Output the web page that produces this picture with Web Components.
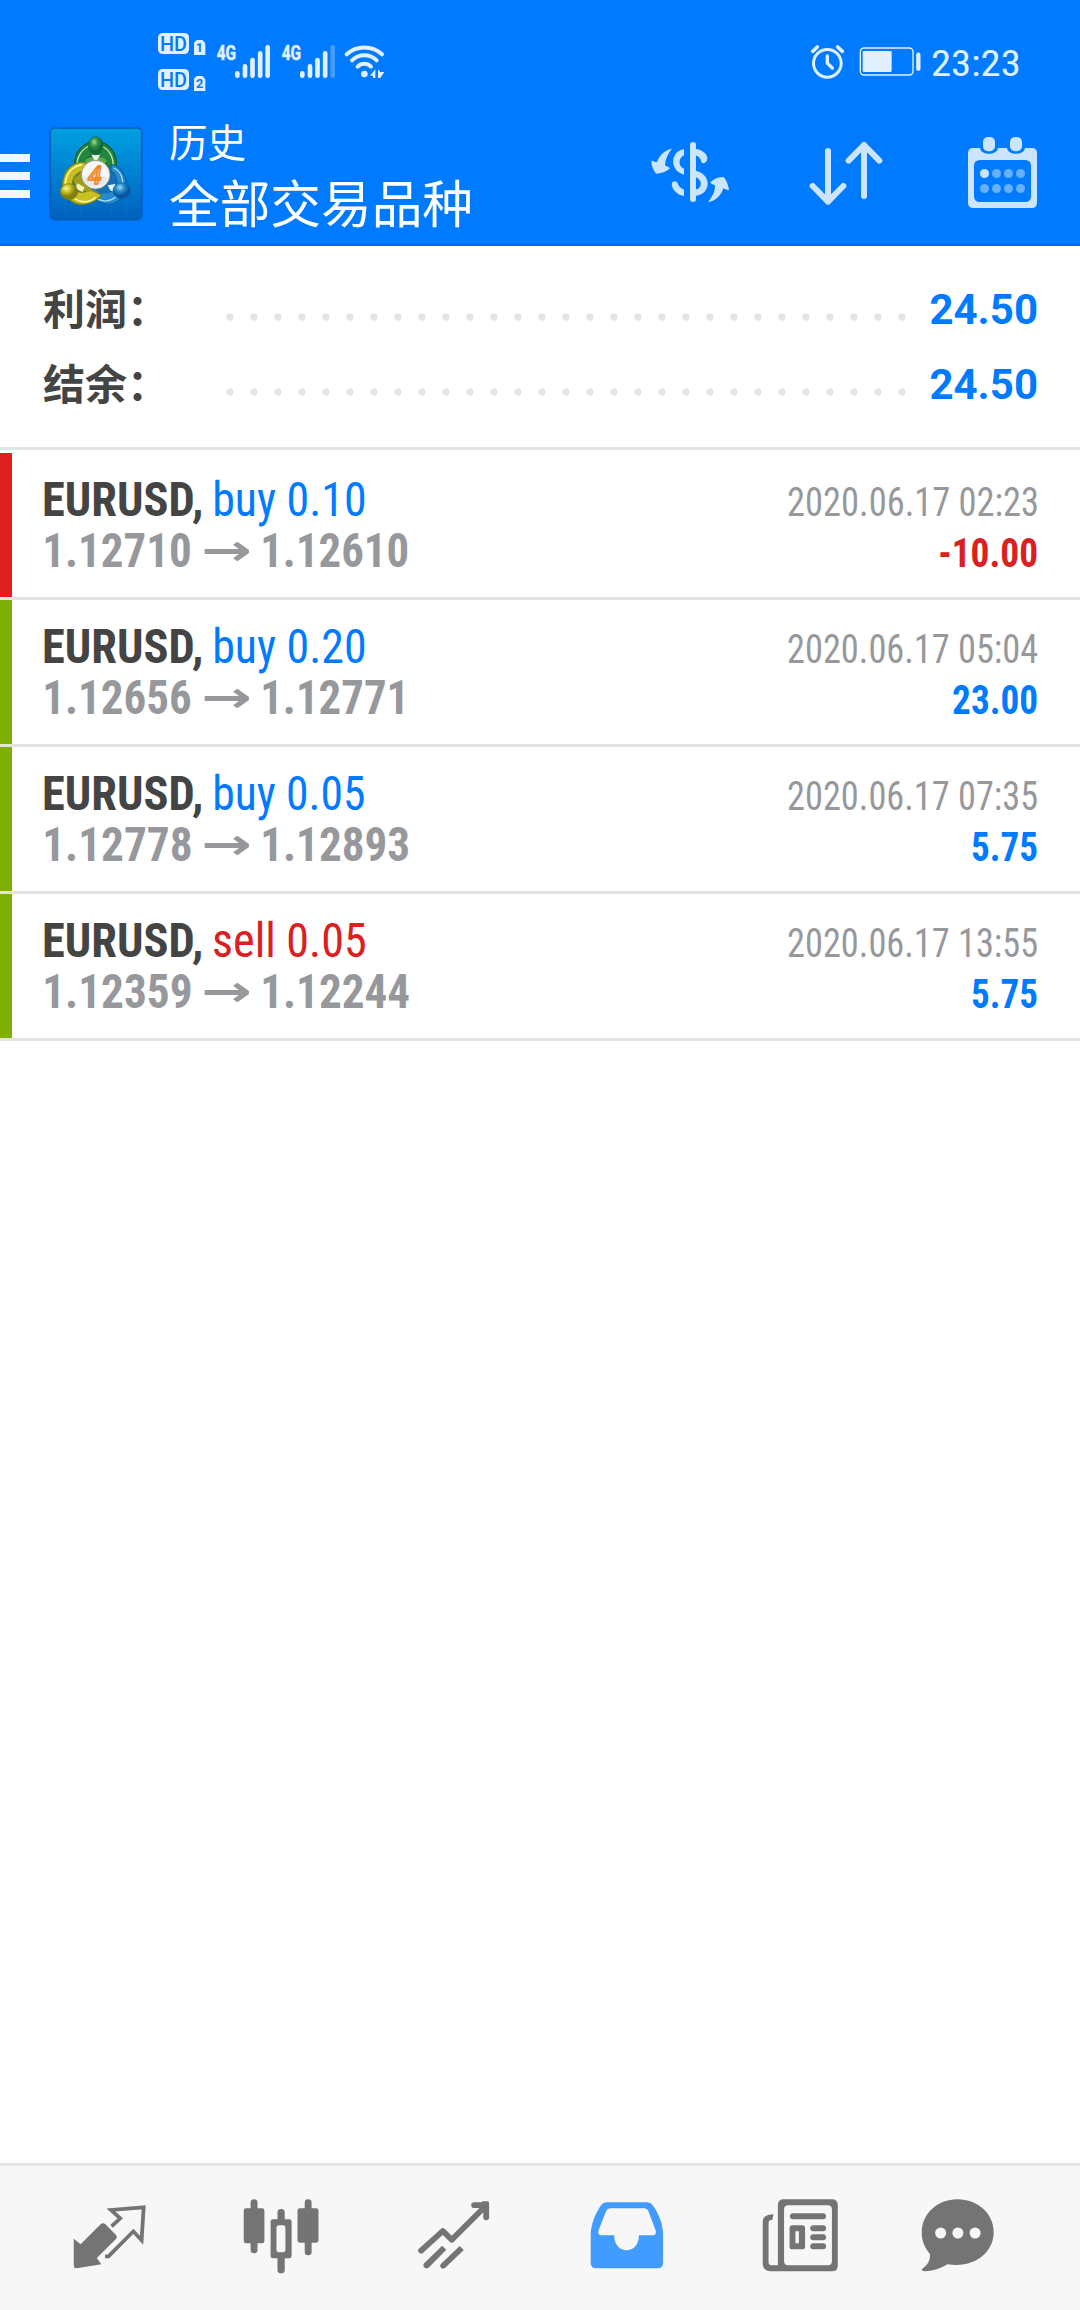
<!DOCTYPE html>
<html lang="zh-CN">
<head>
<meta charset="utf-8">
<title>历史</title>
<style>
html,body{margin:0;padding:0;background:#fff}
body{width:1080px;height:2310px;overflow:hidden;font-family:"Roboto Condensed",Roboto,"Noto Sans CJK SC",sans-serif}
</style>
</head>
<body>
<trade-app></trade-app>
<script>
const define=(name,html,extra)=>{
  const t=document.createElement('template');t.innerHTML=html;
  customElements.define(name,class extends HTMLElement{
    connectedCallback(){
      if(this.shadowRoot)return;
      this.attachShadow({mode:'open'}).append(t.content.cloneNode(true));
      if(extra)extra.call(this,this.shadowRoot);
    }
  });
};

/* Text whose drawn glyphs span exactly `ink` pixels. */
const ctx=document.createElement('canvas').getContext('2d');
const FAMILY='"Roboto Condensed",Roboto,"Noto Sans CJK SC",sans-serif';
customElements.define('fit-text',class extends HTMLElement{
  connectedCallback(){
    if(this.shadowRoot)return;
    const a=n=>this.getAttribute(n),size=+a('size'),ink=+a('ink'),weight=a('weight')||400,family=a('family')||FAMILY;
    const root=this.attachShadow({mode:'open'});
    root.innerHTML=`<style>:host{display:block;flex:none;width:${ink}px;white-space:pre}
      span{display:inline-block;transform-origin:0 50%}</style><span></span>`;
    const s=root.querySelector('span');
    s.textContent=a('text');
    s.style.font=`${weight} ${size}px/${a('line')||51}px ${family}`;
    ctx.font=`${weight} ${size}px ${family}`;
    const m=ctx.measureText(a('text')),k=ink/(m.actualBoundingBoxLeft+m.actualBoundingBoxRight);
    s.style.transform=`translateX(${m.actualBoundingBoxLeft*k}px) scaleX(${k})`;
  }
});

define('status-bar',`<style>
:host{display:flex;height:110px;box-sizing:border-box;padding:20px 62px 0 140px;justify-content:space-between;color:#e0f0ff}
svg{display:block}
.right{display:flex}
fit-text{margin:23px 0 0 2px}
</style>
<svg width="260" height="80" viewBox="0 0 780 240" fill="#e0f0ff" font-family="Roboto" font-weight="700">
<rect x="54" y="39" width="93" height="63" rx="14"/><rect x="54" y="147" width="93" height="63" rx="14"/>
<g fill="#007bff" font-size="61" font-weight="500"><text x="60" y="93" textLength="81" lengthAdjust="spacingAndGlyphs">HD</text><text x="60" y="201" textLength="81" lengthAdjust="spacingAndGlyphs">HD</text></g>
<path d="M170 60H187L196 70V105H162V68ZM170 168H187L196 178V213H162V176Z"/>
<g fill="#007bff" font-size="38"><text x="167" y="97">1</text><text x="168" y="205">2</text></g>
<g font-size="61" font-weight="700" stroke="#e0f0ff" stroke-width="1.500"><text x="230" y="119" textLength="58" lengthAdjust="spacingAndGlyphs">4G</text><text x="425" y="119" textLength="58" lengthAdjust="spacingAndGlyphs">4G</text></g>
<g stroke="#e0f0ff" stroke-width="14" stroke-linecap="round">
<path d="M292 160V167M315 139V167M337.500 120V167M360.500 100V167M383 82V167"/>
<path d="M487 160V167M510 139V167M532.500 120V167M555.500 100V167"/><path d="M578 82V167" opacity=".3"/></g>
<g fill="none" stroke="#e0f0ff" stroke-width="12" stroke-linecap="round"><path d="M620 103A78 78 0 0 1 726 103M636 121A53 53 0 0 1 710 121M653 140A28 28 0 0 1 693 140"/></g>
<circle cx="673" cy="162" r="10"/><path d="M706 148V174H699V167H690ZM714 148L721 156H733L721 174H714Z"/>
</svg>
<div class="right">
<svg width="150" height="80" viewBox="0 0 450 240" fill="none" stroke="#e0f0ff" stroke-linecap="round">
<circle cx="142" cy="130" r="41.500" stroke-width="9"/><path d="M142 108V130L157 144" stroke-width="10" stroke-linejoin="round"/><path d="M98 94L112 81M187 94L173 81" stroke-width="11"/>
<rect x="241" y="84" width="158" height="81" rx="11" stroke-width="4"/><rect x="248" y="93" width="87" height="63" rx="4" fill="#e0f0ff" stroke="none"/><path d="M415 104V146" stroke-width="13"/>
</svg>
<fit-text text="23:23" size="36.500" ink="86.500" line="41"></fit-text>
</div>`);

define('app-logo',`<style>:host{display:block;flex:none;width:92px;height:92px}svg{display:block;overflow:visible}</style>
<svg width="92" height="92" viewBox="30 24 276 276">
<defs>
<linearGradient id="bg" x2="0" y2="1"><stop stop-color="#00a0e0"/><stop offset=".5" stop-color="#0080d2"/><stop offset="1" stop-color="#0060bd"/></linearGradient>
<radialGradient id="g" cx=".4" cy=".3"><stop stop-color="#a6e092"/><stop offset=".45" stop-color="#38944b"/><stop offset="1" stop-color="#116d36"/></radialGradient>
<radialGradient id="y" cx=".35" cy=".3"><stop stop-color="#f9f397"/><stop offset=".5" stop-color="#c9c025"/><stop offset="1" stop-color="#817f10"/></radialGradient>
<radialGradient id="b" cx=".4" cy=".3"><stop stop-color="#a3e0f8"/><stop offset=".5" stop-color="#278dce"/><stop offset="1" stop-color="#0758a3"/></radialGradient>
</defs>
<rect x="30.500" y="24.500" width="275" height="275" rx="13" fill="url(#bg)" stroke="#0759ae" stroke-width="4"/>
<path d="M76 27V297M122 27V297M168 27V297M214 27V297M260 27V297M33 70H303M33 116H303M33 162H303M33 208H303M33 254H303" stroke="#4cc0f0" stroke-opacity=".13" stroke-width="2"/>
<g stroke-linejoin="round">
<path d="M104 137C101 98 130 65 167 64C207 64 233 101 229 140C228 158 222 169 214 178L187 151C197 133 193 111 167 102C145 109 133 122 134 137L119 158Z" fill="#238540" stroke="#0b6235" stroke-width="4"/>
<path d="M134 132L158 98H176L208 142L192 190H150Z" fill="#1c6b34"/>
<path d="M111 137C110 109 127 85 153 75M183 78C211 89 222 116 219 145" fill="none" stroke="#b9e7a9" stroke-width="4"/>
<path d="M134 123C145 105 190 105 201 123L184 142H150Z" fill="#55ac4c"/><path d="M154 104H181L171 120H163Z" fill="#fff" opacity=".9"/>
<path d="M214 133C244 139 263 170 257 205C251 239 221 259 190 250C164 243 147 229 139 210L168 196C183 219 214 224 229 196C233 177 226 162 211 151Z" fill="#248bce" stroke="#0963a9" stroke-width="4"/>
<path d="M205 150L230 172L222 214L180 224L160 200Z" fill="#1571b4"/>
<path d="M221 144C245 154 251 181 247 202M150 219C176 247 208 250 229 229" fill="none" stroke="#a7dcf4" stroke-width="4"/>
<path d="M138 128C99 121 68 154 68 195C72 239 109 262 146 250C165 244 178 235 184 225L150 208C130 224 98 216 97 194C97 174 110 157 137 151Z" fill="#cabf20" stroke="#77841c" stroke-width="4"/>
<path d="M130 150L100 178L108 208L150 216L160 200Z" fill="#a39d1c"/>
<path d="M126 134C94 140 78 163 76 191M104 236C126 250 149 247 167 232" fill="none" stroke="#fbf5a0" stroke-width="5"/>
<path d="M112 190L133 202L128 216L108 207Z" fill="#fff7bd"/><path d="M203 196L226 192L224 217L211 211Z" fill="#e3f7ff"/>
</g>
<ellipse cx="167" cy="77" rx="22" ry="27" fill="url(#g)" stroke="#11683a" stroke-width="2"/>
<ellipse cx="87" cy="215" rx="26" ry="24" fill="url(#y)" stroke="#777914" stroke-width="2"/>
<ellipse cx="245" cy="212" rx="26" ry="24" fill="url(#b)" stroke="#0960aa" stroke-width="2"/>
<circle cx="167" cy="164" r="43" fill="#f7f7f9" stroke="#76765a" stroke-width="2"/>
<path d="M127 174Q166 161 206 174A43 43 0 0 1 127 174Z" fill="#dedee8" opacity=".6"/>
<text x="165" y="191" text-anchor="middle" font-family="Roboto" font-style="italic" font-weight="500" font-size="75" fill="#ffbc6b" stroke="#f2841e" stroke-width="4">4</text>
</svg>`);

define('tool-bar',`<style>
:host{display:flex;height:133px;align-items:flex-start}
svg{display:block;flex:none}
.menu{margin-top:44px}
app-logo{margin:18px 0 0 20px}
.titles{width:302.500px;margin:8.500px 0 0 27.500px}
.actions{display:flex;margin:25px 0 0 178px}
</style>
<svg class="menu" width="30" height="44" fill="#f0f8ff"><path d="M0 0H30V8H0ZM0 18H30V26H0ZM0 36H30V44H0Z"/></svg>
<app-logo></app-logo>
<div class="titles"><fit-text text="历史" size="39" ink="75" line="51"></fit-text><fit-text text="全部交易品种" size="51" ink="300" line="71"></fit-text></div>
<div class="actions">
<svg width="80" height="75" viewBox="60 45 240 225" fill="#cce5ff">
<path d="M126 86C113 87 91 99 80 127C75 126 70 122 64 122C64 137 69 148 78 161C94 161 108 156 120 145C116 141 110 139 105 136C106 118 114 100 126 86ZM234 246C246 233 256 214 255 196C250 193 245 192 240 188C252 176 265 171 281 171C290 182 294 194 297 209C292 212 287 207 280 205C274 225 258 244 234 246Z"/>
<rect x="180" y="66" width="18" height="180" rx="9"/>
<path d="M162 87C119 95 119 153 162 164V146C144 140 144 114 162 106ZM162 209C152 206 145 198 143 190C140 180 126 182 125 192C127 211 143 226 162 228ZM196 86C216 89 232 101 232 115C232 127 221 134 214 127C213 116 207 109 196 106ZM196 152C220 156 234 174 233 192C232 214 216 226 196 228V209C217 206 219 179 196 171Z"/>
</svg>
<svg style="margin-left:78px" width="75" height="75" viewBox="534 45 225 225" fill="none" stroke="#cce5ff" stroke-width="18" stroke-linecap="round" stroke-linejoin="round"><path d="M594 93V245M548 198L594 245L640 198M702 228V75M656 122L702 75L748 122"/></svg>
<svg style="margin-left:84px" width="72" height="75" viewBox="1011 45 216 225" fill="#cce5ff">
<path fill-rule="evenodd" d="M1030 84H1050C1052 107 1102 107 1104 84H1131C1133 107 1183 107 1185 84H1205Q1221 84 1221 100V248Q1221 264 1205 264H1030Q1014 264 1014 248V100Q1014 84 1030 84ZM1050 120Q1032 120 1032 138V228Q1032 246 1050 246H1185Q1203 246 1203 228V138Q1203 120 1185 120Z"/>
<rect x="1059" y="51" width="36" height="43" rx="15"/><rect x="1140" y="51" width="36" height="43" rx="15"/><circle cx="1063.500" cy="160.500" r="13.500"/>
<g fill="#66b0ff"><circle cx="1099.500" cy="160.500" r="13.500"/><circle cx="1135.500" cy="160.500" r="13.500"/><circle cx="1171.500" cy="160.500" r="13.500"/><circle cx="1063.500" cy="205.500" r="13.500"/><circle cx="1099.500" cy="205.500" r="13.500"/><circle cx="1135.500" cy="205.500" r="13.500"/><circle cx="1171.500" cy="205.500" r="13.500"/></g></svg>
</div>`);

define('summary-row',`<style>
:host{display:flex;height:75px;padding-left:43px;color:#444}
.label{width:175px;flex:none;font:700 42px/60px "Noto Sans CJK SC",sans-serif;height:60px;white-space:nowrap}
.dots{width:696px;flex:none;height:8px;margin-top:36.300px;background:radial-gradient(circle,#e4e4e4 3.300px,transparent 4px) 0 0/24px 8px repeat-x}
.value{flex:1;text-align:right;padding-right:42px;color:#007bff;font:700 42px/60px Roboto,sans-serif;margin-top:3px}
</style><div class="label"><slot></slot></div><div class="dots"></div><div class="value"><slot name="value"></slot></div>`);

define('deal-row',`<style>
:host{display:flex;justify-content:space-between;height:144px;border-bottom:3px solid #e4e4e4;background:#fff;color:#444}
.bar{width:12px;background:#7fb000;flex:none}
:host([loss]) .bar{background:#e02020}
.main{flex:1;padding:21px 0 0 32px}
.line{display:flex;height:51px}
.side{padding:24px 43px 0 0;display:flex;flex-direction:column;align-items:flex-end}
.price{color:#97989c;padding-left:.700px}
</style><div class="bar"></div><div class="main"><div class="line name"></div><div class="line price"></div></div><div class="side"></div>`,
function(r){
  const a=n=>this.getAttribute(n),ft=(text,size,ink,weight,style)=>`<fit-text text="${text}" size="${size}" ink="${ink}" weight="${weight}" style="${style||''}"></fit-text>`;
  const blue='#007bff',red='#da2020';
  const sell=a('op').startsWith('sell');
  r.querySelector('.name').innerHTML=ft('EURUSD,',48,156.7,700)+ft(a('op'),48,sell?151:149,400,`margin-left:${sell?13:14.5}px;color:${sell?red:blue}`);
  r.querySelector('.price').innerHTML=ft(a('from'),48,145.5,700)+
    `<fit-text text="→" size="43" ink="45" weight="700" family="DejaVu Sans" style="margin:0 14.500px 0 13.500px"></fit-text>`+ft(a('to'),48,a('to-ink')||145,700);
  r.querySelector('.side').innerHTML=ft(a('time'),40,249.5,400,'color:#97989c')+ft(a('amount'),40,a('amount-ink'),700,`color:${this.hasAttribute('loss')?red:blue}`);
});

define('nav-bar',`<style>
:host{display:flex;box-sizing:border-box;height:147px;border-top:3px solid #e4e4e4;background:#f7f7f7;padding:30.700px 0 0 72.300px;align-items:flex-start}
svg{display:block;flex:none;height:78.330px;fill:#747474}
.s{fill:none;stroke:#747474}
</style>
<svg style="width:75.800px" viewBox="210 140 220 235" preserveAspectRatio="none">
<path d="M215 265L235 282L293 222Q300 215 307 222L337 253Q343 260 337 267L282 323L295 342L224 354Q215 354 215 345Z"/>
<path class="s" stroke-width="11" d="M325 228L350 204L323 179L418 171L412 270L388 243L316 318H306"/></svg>
<svg style="width:77.900px;margin-left:94.300px" viewBox="704 140 226 235" preserveAspectRatio="none">
<rect x="709" y="174" width="60" height="105" rx="7"/><rect x="729" y="147" width="20" height="162" rx="10"/>
<rect x="865" y="174" width="61" height="103" rx="7"/><rect x="886" y="147" width="20" height="168" rx="10"/>
<rect x="807" y="176" width="21" height="50" rx="10"/><rect x="807" y="310" width="21" height="59" rx="10"/><rect x="787" y="207" width="61" height="117" rx="7"/><rect x="804" y="225" width="26" height="81" rx="7" fill="#f7f7f7"/></svg>
<svg style="width:74px;margin-left:96.400px" viewBox="1210 140 215 235" preserveAspectRatio="none"><g class="s" stroke-width="17" stroke-linecap="round" stroke-linejoin="round"><path d="M1222 301L1285 242L1311 268L1410 166M1376 164.500H1411V201" /><path d="M1402 157H1415V175Z" stroke-width="8" fill="#747474"/></g><path d="M1283 286L1295 298L1245 351C1236 360 1223 348 1231 339ZM1334 287L1346 299L1292 352C1283 359 1273 349 1280 340Z"/></svg>
<svg style="width:75.800px;margin-left:97.900px" viewBox="141 140 220 235" preserveAspectRatio="none"><path fill="#429bff" fill-rule="evenodd" d="M193 156H310Q320 156 326 165C344 191 356 222 356 254V338Q356 354 340 354H162Q146 354 146 338V252C147 222 159 190 176 165Q182 156 193 156ZM205 174Q194 174 190 184L168 242Q166 255 178 255H214C214 315 286 315 286 255H325Q337 255 335 242L314 184Q310 174 300 174Z"/></svg>
<svg style="width:78.500px;margin-left:96.400px" viewBox="641 140 228 235" preserveAspectRatio="none"><path fill-rule="evenodd" d="M708 147H847Q864 147 864 164V346Q864 363 847 363H670Q646 363 646 339V215Q646 192 677 192L674 209Q663 208 663 217V336Q663 345 672 345H690V164Q690 147 708 147ZM720 165Q708 165 708 177V333Q708 345 720 345H835Q847 345 847 333V177Q847 165 835 165ZM732 225H761Q769 225 769 233V289Q769 297 761 297H732Q724 297 724 289V233Q724 225 732 225ZM741 243V279H751V243Z"/><rect x="725" y="189" width="105" height="18" rx="9"/><rect x="784" y="225" width="46" height="18" rx="9"/><rect x="784" y="252" width="46" height="18" rx="9"/><rect x="784" y="279" width="46" height="18" rx="9"/></svg>
<svg style="width:75.100px;margin-left:81px" viewBox="1104 140 218 235" preserveAspectRatio="none"><path d="M1213 147C1272 147 1318 190 1318 246C1318 306 1262 355 1184 342C1162 356 1139 363 1117 363Q1105 361 1112 354C1127 345 1134 329 1133 312C1116 289 1109 269 1109 247C1109 191 1154 147 1213 147Z"/><g fill="#f7f7f7"><ellipse cx="1164" cy="248" rx="16" ry="16.500"/><ellipse cx="1214" cy="248" rx="16" ry="16.500"/><ellipse cx="1264" cy="248" rx="16" ry="16.500"/></g></svg>`);

define('trade-app',`<style>
:host{display:flex;flex-direction:column;width:1080px;height:2310px;background:#fff}
header{background:#007bff;color:#fff;border-bottom:3px solid #006fe6;height:243px;flex:none}
.sum{height:170px;padding-top:31px;border-bottom:3px solid #e4e4e4;margin-bottom:3px;flex:none}
main{flex:1}
</style>
<header><status-bar></status-bar><tool-bar></tool-bar></header>
<section class="sum"><summary-row>利润：<span slot="value">24.50</span></summary-row><summary-row>结余：<span slot="value">24.50</span></summary-row></section>
<main>
<deal-row loss op="buy 0.10" from="1.12710" to="1.12610" time="2020.06.17 02:23" amount="-10.00" amount-ink="97"></deal-row>
<deal-row op="buy 0.20" from="1.12656" to="1.12771" to-ink="139.500" time="2020.06.17 05:04" amount="23.00" amount-ink="84"></deal-row>
<deal-row op="buy 0.05" from="1.12778" to="1.12893" time="2020.06.17 07:35" amount="5.75" amount-ink="65"></deal-row>
<deal-row op="sell 0.05" from="1.12359" to="1.12244" to-ink="146" time="2020.06.17 13:55" amount="5.75" amount-ink="65"></deal-row>
</main>
<nav-bar></nav-bar>`);
</script>
</body>
</html>
